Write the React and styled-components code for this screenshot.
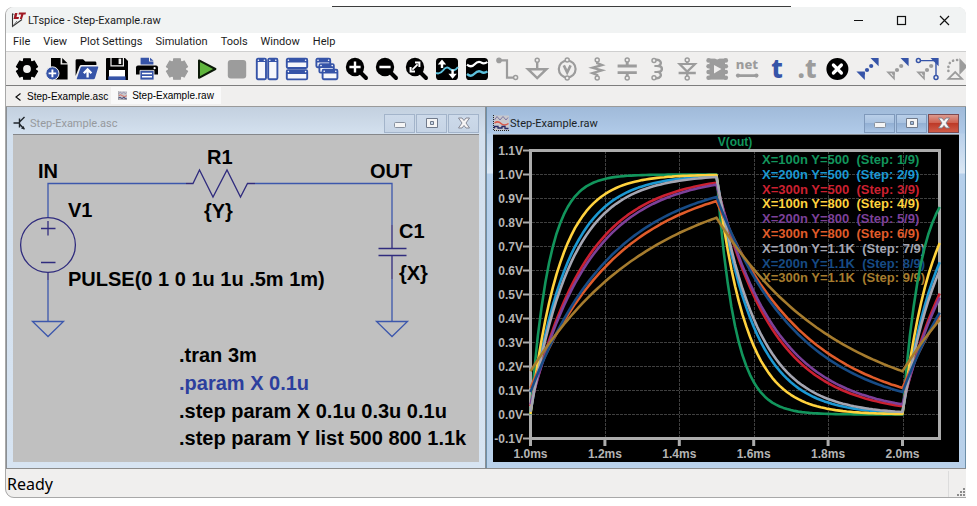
import React from "react";
import styled, { createGlobalStyle, css } from "styled-components";

const GlobalStyle = createGlobalStyle`
  * { box-sizing: border-box; }
  body { margin: 0; background: #fff; font-family: "Noto Sans", "Open Sans", sans-serif; color: #1c1c1c; }
  button { font: inherit; color: inherit; background: none; border: 0; padding: 0; margin: 0; }
  svg { display: block; }
`;

const BLUE = "#3654a8";
const GRAY = "#9c9c9c";
const FACE = "#f0efee";
const UI_FONT = `Roboto, "Noto Sans", sans-serif`;

/* ---------- application frame ---------- */

const Desktop = styled.div`
  padding: 7px 11px 9px 6px;
  background: linear-gradient(90deg, transparent 34%, #3c3c3c 34%, #3c3c3c 81%, transparent 81%) 0 6px / 100% 1px no-repeat;
`;

const AppWindow = styled.div`
  border-radius: 8px 8px 0 8px;
  overflow: hidden;
  background: ${FACE};
  box-shadow: -1px 0 0 0 #a8a8a8, 0 1px 0 0 #a8a8a8;
`;

const TitleBar = styled.header`
  display: flex;
  align-items: center;
  height: 26px;
  padding-left: 5px;
  background: #f1f3f3;
`;

const AppTitle = styled.h1`
  flex: 1;
  margin: 0;
  padding: 1px 0 0 1px;
  font: 400 11px/14px ${UI_FONT};
`;

const CaptionButton = styled.button`
  display: grid;
  place-items: center;
  width: 43px;
  height: 26px;
`;

const MenuBar = styled.nav`
  display: flex;
  gap: 13px;
  height: 18px;
  padding: 0 7px;
  background: #fff;
`;

const MenuItem = styled.button`
  font: 11px/18px ${UI_FONT};
`;

const Toolbar = styled.div`
  display: flex;
  align-items: center;
  height: 35px;
  padding-left: 6px;
  overflow: hidden;
  border-top: 1px solid #cfcfcf;
  border-bottom: 1px solid #7d7d7d;
  background: ${FACE};
`;

const ToolButton = styled.button`
  flex: none;
  display: grid;
  place-items: center;
  width: 30px;
  height: 30px;
`;

const TabStrip = styled.div`
  display: flex;
  align-items: flex-start;
  height: 21px;
  padding: 1px 0 0 5px;
  border-bottom: 1px solid #9a9a9a;
`;

const Tab = styled.button`
  display: flex;
  align-items: center;
  gap: 5px;
  height: ${(p) => (p.$active ? 17 : 20)}px;
  padding: 0 ${(p) => (p.$active ? 7 : 3)}px 0 ${(p) => (p.$active ? 7 : 2)}px;
  background: ${(p) => (p.$active ? "#f9f9f9" : "transparent")};
  font: 10px/14px "Liberation Sans", Arial, sans-serif;
  color: #000;
`;

const StatusBar = styled.footer`
  display: flex;
  justify-content: space-between;
  align-items: flex-end;
  height: 29px;
  border-top: 1px solid #8c8c8c;
  font-size: 16px;
  line-height: 26px;
  padding-left: 1px;
  color: #000;
`;

const StatusText = styled.span`
  align-self: center;
  padding-top: 2px;
`;

const Grip = styled.div`
  width: 18px;
  height: 26px;
  border-left: 1px solid #dcdcdc;
  display: flex;
  align-items: flex-end;
  justify-content: flex-end;
`;

/* ---------- document windows ---------- */

const Workspace = styled.main`
  display: grid;
  grid-template-columns: repeat(2, minmax(0, 1fr));
`;

const Child = styled.section`
  border: solid ${(p) => (p.$active ? "#6d8fa8" : "#8a8f94")};
  border-width: 0 1px 0 1px;
  padding: 0 6px 6px;
  ${(p) =>
    p.$active
      ? css`background: linear-gradient(#a0bad9, #b0cae8 26px, #b9d0ea 27px, #dbe7f4 66px, #b5cfeb 67px, #b9d1ea);`
      : css`background: linear-gradient(#c3d0df, #d3e0ee 26px, #d7e4f2);`}
`;

const ChildBar = styled.header`
  display: flex;
  align-items: center;
  height: 27px;
  gap: 1px;
`;

const ChildTitle = styled.h2`
  flex: 1;
  margin: 0;
  padding: 6px 0 0;
  font: 400 11px/14px ${UI_FONT};
  color: ${(p) => (p.$active ? "#1a1f26" : "#96999d")};
`;

const ChildIcon = styled.span`
  padding-top: 5px;
`;

const ChildButton = styled.button`
  display: grid;
  place-items: center;
  width: 31px;
  height: 19px;
  margin-top: 5px;
  border: 1px solid ${(p) => (p.$close ? "#7d4a50" : p.$active ? "#7f99bb" : "#a3b4ca")};
  background: ${(p) =>
    p.$close
      ? "linear-gradient(#dc9a8e, #cf6150 45%, #bd3a28 50%, #cf5b48)"
      : p.$active
      ? "linear-gradient(#b9cfe9, #a9c2e0 45%, #93b0d4 50%, #a9c4e4)"
      : "linear-gradient(#cddaea, #c6d4e5)"};
`;

const Canvas = styled.svg`
  width: 100%;
  height: auto;
  background: ${(p) => p.$fill};
  border-top: 1px solid #85878a;
  font-family: "Liberation Sans", Arial, sans-serif;
  font-weight: 700;
`;

const SchematicText = styled.text`
  font-size: 20px;
  fill: ${(p) => p.$color || "#000"};
`;

const PlotText = styled.text`
  font-size: ${(p) => (p.$legend ? 13 : 12)}px;
  white-space: pre;
  fill: ${(p) => p.$color || "#b4b4b4"};
  text-anchor: ${(p) => p.$anchor || "start"};
`;

/* ---------- toolbar icons ---------- */

const IconSvg = styled.svg`
  overflow: visible;
`;

const IconText = styled.text`
  font-family: "Noto Sans", sans-serif;
  font-weight: 800;
  font-size: ${(p) => p.$size}px;
  text-anchor: middle;
  fill: ${(p) => p.$color};
`;

const Svg = ({ children }) => (
  <IconSvg width="24" height="24" viewBox="0 0 24 24" fill="none" aria-hidden="true">
    {children}
  </IconSvg>
);

const gearPath = Array.from({ length: 6 }, (_, i) => {
  const at = (deg, r) => {
    const a = ((i * 60 - 90 + deg) * Math.PI) / 180;
    return `${(12 + r * Math.cos(a)).toFixed(2)} ${(12 + r * Math.sin(a)).toFixed(2)}`;
  };
  return `${at(-25, 8.4)}L${at(-18, 10.8)}L${at(18, 10.8)}L${at(25, 8.4)}`;
}).join("L");

const Gear = ({ color, hole }) => (
  <Svg>
    <path d={`M${gearPath}z`} fill={color} stroke={color} strokeWidth="1.2" strokeLinejoin="round" />
    {hole && <circle cx="12" cy="12" r="3.9" fill={FACE} />}
  </Svg>
);

const Pin = ({ x, y }) => <circle cx={x} cy={y} r="2" stroke={GRAY} strokeWidth="1.5" fill={FACE} />;

const Lens = ({ children }) => (
  <Svg>
    <path d="M15 15L21 21" stroke="#000" strokeWidth="4" strokeLinecap="round" />
    <circle cx="10" cy="10" r="9.2" fill="#000" />
    <g stroke="#fff" strokeWidth="2.4">{children}</g>
  </Svg>
);

const Pane = ({ x, y, w, h, bar = 3.5 }) => (
  <g>
    <rect x={x + 0.8} y={y + 0.8} width={w - 1.6} height={h - 1.6} rx="1.2" fill="#f6f7fb" stroke={BLUE} strokeWidth="1.9" />
    <path d={`M${x + 0.8} ${y + bar / 2 + 0.5}h${w - 1.6}`} stroke={BLUE} strokeWidth={bar} />
    <circle cx={x + 2.4} cy={y + 2.2} r="0.8" fill="#fff" />
    <circle cx={x + w - 2.4} cy={y + 2.2} r="0.8" fill="#fff" />
  </g>
);

const Dots = ({ color }) => (
  <g fill={color}>
    <circle cx="8.5" cy="16.5" r="1.5" />
    <circle cx="12" cy="13" r="2.1" />
    <circle cx="16.2" cy="9" r="2.1" />
  </g>
);

const TopTri = <path d="M15.5 1H23.6V9.2z" fill={BLUE} />;
const HollowTri = <path d="M3 15.4H9V21.6z" stroke={GRAY} strokeWidth="1.6" />;

const tools = [
  ["Settings", <Gear color="#000" hole />],
  ["New schematic", (
    <Svg>
      <path d="M6 1H15.6V7.6H22.6V22.5H6z" fill="#000" />
      <path d="M17.2 1L22.6 6.2H17.2z" fill="#000" />
      <circle cx="7.4" cy="16.4" r="6.6" fill={BLUE} stroke={FACE} strokeWidth="1" />
      <path d="M7.4 12.6V20.2M3.6 16.4H11.2" stroke="#fff" strokeWidth="1.9" />
    </Svg>
  )],
  ["Open", (
    <Svg>
      <path d="M0.6 3.6Q0.6 2.2 2 2.2H8L10.4 4.6H20Q21.4 4.6 21.4 6V8H6.4Q5 8 4.4 9.4L0.6 19z" fill="#000" />
      <path d="M7.2 9.4H22.6Q23.6 9.4 23.2 10.6L20 21Q19.6 22.2 18.4 22.2H2Q1.6 22.2 1.8 21.4L5.6 10.6Q6 9.4 7.2 9.4z" fill={BLUE} />
      <path d="M12.6 20.4V13.5M8.8 16.2L12.6 12.4L16.4 16.2" stroke="#fff" strokeWidth="2.3" />
    </Svg>
  )],
  ["Save", (
    <Svg>
      <path d="M2 1H20L23 4V23H1V2Q1 1 2 1z" fill="#000" />
      <path d="M6 1V8.8H18.4V1" stroke={FACE} strokeWidth="1.2" />
      <rect x="13.6" y="1.6" width="2.6" height="5.4" fill={FACE} />
      <rect x="4" y="13" width="16" height="7" fill="#fff" />
      <rect x="3.4" y="19.4" width="17.2" height="3.6" fill={BLUE} />
    </Svg>
  )],
  ["Print", (
    <Svg>
      <path d="M5.6 0.8H14V4.6H18.4V7.4H5.6z" fill={BLUE} />
      <path d="M15 0.8L18.6 3.8H15z" fill={BLUE} />
      <path d="M3 8.4H21Q23 8.4 23 10.4V17.4H1V10.4Q1 8.4 3 8.4z" fill="#000" />
      <circle cx="19.6" cy="11.2" r="1.1" fill="#fff" />
      <path d="M5 13.4H19V23H5z" fill={BLUE} stroke={FACE} strokeWidth="0.8" />
      <path d="M7 16.6H17M7 19.8H17" stroke="#fff" strokeWidth="1.5" />
    </Svg>
  )],
  ["Configure analysis", <Gear color={GRAY} />],
  ["Run", <Svg><path d="M4 3.4L20.4 12L4 20.8z" fill="#5fb53c" stroke="#0c1a08" strokeWidth="2" strokeLinejoin="round" /></Svg>],
  ["Stop", <Svg><rect x="2.8" y="3" width="18.4" height="18.4" rx="3" fill={GRAY} /></Svg>],
  ["Tile vertically", <Svg><Pane x={1} y={1} w={10.8} h={22} /><Pane x={12.4} y={1} w={10.8} h={22} /></Svg>],
  ["Tile horizontally", <Svg><Pane x={1} y={1} w={22} h={10.8} bar={4} /><Pane x={1} y={12.4} w={22} h={10.8} bar={4} /></Svg>],
  ["Cascade", <Svg><Pane x={0.6} y={1} w={15.4} h={10} bar={4} /><Pane x={3.6} y={6.4} w={16} h={10} bar={4} /><Pane x={6.8} y={12} w={16.4} h={11} bar={4} /></Svg>],
  ["Zoom in", <Lens><path d="M10 4.4V15.6M4.4 10H15.6" /></Lens>],
  ["Zoom out", <Lens><path d="M4.4 10H15.6" /></Lens>],
  ["Zoom to fit", <Lens><path d="M7.4 12.6L12.6 7.4" strokeWidth="1.8" /><path d="M10 5.6H14.4V10M5.6 10V14.4H10" strokeWidth="2" /></Lens>],
  ["Autorange", (
    <Svg>
      <rect x="1" y="1" width="22" height="22" rx="3.6" fill="#000" />
      <path d="M1 16Q5 17.5 8 13.5Q11.5 8.5 15 12Q19 15.5 23 10" stroke="#5cc0dc" strokeWidth="2" />
      <path d="M7 5V11M17.6 12.5V18" stroke="#fff" strokeWidth="2.4" />
      <path d="M2.8 7.4L7 2.4L11.2 7.4zM13.4 16.8L17.6 21.8L21.8 16.8z" fill="#fff" />
    </Svg>
  )],
  ["Plot settings", (
    <Svg>
      <rect x="1" y="1" width="22" height="22" rx="3.6" fill="#000" />
      <path d="M2 7.6Q6 11 9.4 7.4Q13 3.6 16 5.4Q19 7.6 22.4 5" stroke="#fff" strokeWidth="2.2" />
      <path d="M2 17Q6 20.4 9.4 16.8Q13 13 16 14.8Q19 17 22.4 14.4" stroke="#5cc0dc" strokeWidth="2.4" />
    </Svg>
  )],
  ["Wire", <Svg><path d="M4 3.4H12V20.6H19" stroke={GRAY} strokeWidth="2.2" /><circle cx="4" cy="3.4" r="2.8" fill={GRAY} /><Pin x={20.6} y={20.6} /></Svg>],
  ["Ground", <Svg><path d="M12.2 4V12M3 12.2H21.4L12.2 21z" stroke={GRAY} strokeWidth="2.4" /><Pin x={12.2} y={3.2} /></Svg>],
  ["Voltage source", <Svg><circle cx="12.2" cy="12" r="8.4" stroke={GRAY} strokeWidth="2.2" /><path d="M8.800 8.400L12.200 15.400L15.600 8.400" stroke={GRAY} strokeWidth="2.6" /><Pin x={12.2} y={3} /><Pin x={12.2} y={21} /></Svg>],
  ["Resistor", <Svg><path d="M12.200 4V6.200L17 8L7.400 10.800L17 13.400L7.400 16.200L12.200 18V20" stroke={GRAY} strokeWidth="2.3" /><Pin x={12.2} y={3} /><Pin x={12.2} y={21} /></Svg>],
  ["Capacitor", <Svg><path d="M12.2 4V9M12.2 15.6V20M2.6 9H21.8M2.6 15.6H21.8" stroke={GRAY} strokeWidth="2.9" /><Pin x={12.2} y={3} /><Pin x={12.2} y={21} /></Svg>],
  ["Inductor", <Svg><path d="M9 3.2C15 1.4 18.4 6.4 13.6 9C18 9.6 18 14.4 13.6 15C18.4 17.6 15 22.6 9 20.8" stroke={GRAY} strokeWidth="2.4" /><path d="M9.4 9H14M9.4 15H14" stroke={GRAY} strokeWidth="2" /><Pin x={9} y={3.4} /><Pin x={9} y={20.8} /></Svg>],
  ["Diode", <Svg><path d="M12.2 4V20M3.6 16H20.8" stroke={GRAY} strokeWidth="2.4" /><path d="M4.600 7H20L12.200 14.600z" stroke={GRAY} strokeWidth="2.2" fill={FACE} /><Pin x={12.2} y={3} /><Pin x={12.2} y={21} /></Svg>],
  ["Component", (
    <Svg>
      <rect x="4.4" y="1.600" width="15.6" height="21" fill={GRAY} />
      {[3.4, 9.2, 15, 20.8].map((y) => <g key={y} fill={GRAY}><circle cx="3.6" cy={y} r="2.3" /><circle cx="20.8" cy={y} r="2.3" /></g>)}
      <path d="M9 8L16.4 12L9 16.4z" fill={FACE} />
      <path d="M10 1A2.4 2.4 0 0 0 14.4 1z" fill={FACE} />
    </Svg>
  )],
  ["Net name", (
    <Svg>
      <IconText x="12" y="12" $size={13} $color={GRAY}>net</IconText>
      <path d="M3 18.600H21.400" stroke={GRAY} strokeWidth="2.6" />
      <circle cx="3" cy="18.600" r="2.1" fill={GRAY} /><circle cx="21.4" cy="18.600" r="2.1" fill={GRAY} />
    </Svg>
  )],
  ["Text", <Svg><IconText x="12" y="21" $size={26} $color={BLUE}>t</IconText></Svg>],
  ["SPICE directive", <Svg><IconText x="12" y="21" $size={26} $color={GRAY}>.t</IconText></Svg>],
  ["Delete", <Svg><circle cx="12.4" cy="12" r="11" fill="#000" /><path d="M8.4 8L16.4 16M16.4 8L8.4 16" stroke="#fff" strokeWidth="3.2" strokeLinecap="round" /></Svg>],
  ["Move", <Svg>{TopTri}<Dots color={BLUE} /><path d="M1.4 14.6H9.8V23z" fill={BLUE} /></Svg>],
  ["Duplicate", <Svg>{TopTri}<Dots color={GRAY} />{HollowTri}</Svg>],
  ["Drag", (
    <Svg>
      {TopTri}<Dots color={GRAY} />{HollowTri}
      <path d="M5 3.6H21V18" stroke={BLUE} strokeWidth="1.4" />
      <circle cx="3.4" cy="3.6" r="2" stroke={BLUE} strokeWidth="1.5" fill={FACE} /><circle cx="21" cy="20.4" r="2" stroke={BLUE} strokeWidth="1.5" fill={FACE} />
    </Svg>
  )],
  ["Rotate", (
    <Svg>
      <path d="M3.4 14V10Q4 3 13 3" stroke={GRAY} strokeWidth="2.6" strokeDasharray="0.1 4" strokeLinecap="round" />
      <path d="M14.4 1V18L22.4 9.6z" fill={GRAY} />
      <path d="M3.4 21.8H17L10.2 15z" stroke={GRAY} strokeWidth="1.8" />
    </Svg>
  )],
];

/* ---------- schematic ---------- */

const labels = [
  [38, 178, "IN"], [207, 164, "R1"], [204, 218, "{Y}"], [68, 217, "V1"], [68, 286, "PULSE(0 1 0 1u 1u .5m 1m)"],
  [370, 178, "OUT"], [399, 238, "C1"], [399, 280, "{X}"], [179, 362, ".tran 3m"], [179, 390, ".param X 0.1u", "#2c3f9e"],
  [179, 418, ".step param X 0.1u 0.3u 0.1u"], [179, 445, ".step param Y list 500 800 1.1k"],
];

const Schematic = () => (
  <Canvas viewBox="13 135 466 327" $fill="#c0c0c0" role="img" aria-label="RC circuit schematic">
    <g fill="none" stroke="#3c57ac" strokeWidth="1.3">
      <path d="M48 218V183.500H186M255 183.500H392V225M392 279V321M48 280V321" />
      <path d="M32.5 321.5H63.5L48 336.5zM376.5 321.5H407.5L392 336.5z" />
    </g>
    <g fill="none" stroke="#302c7e" strokeWidth="1.3">
      <path d="M186 183.500H193L199.500 170L213 197L227 170L240.500 197L247.500 183.500H255" />
      <circle cx="48" cy="245" r="27.4" />
      <path d="M41 228.500H55.500M48 221V235.500M41 262.500H55.500M48 272V280" />
      <path d="M392 225V248M378.500 248.500H406.500M378.500 255.500H406.500M392 255.500V279" />
    </g>
    {labels.map(([x, y, t, c]) => <SchematicText key={t} x={x} y={y} $color={c}>{t}</SchematicText>)}
  </Canvas>
);

/* ---------- waveform plot ---------- */

const traces = [
  [100, 500, "#12955c"], [200, 500, "#1b98d2"], [300, 500, "#cb2030"],
  [100, 800, "#ffd23e"], [200, 800, "#7c4199"], [300, 800, "#e05c2a"],
  [100, 1100, "#a5a6b2"], [200, 1100, "#174b85"], [300, 1100, "#a67c2e"],
];

const timeX = (ms) => 530.5 + (ms - 1) * 372;
const voltY = (v) => 414.5 - v * 240;

function tracePath(nano, ohms) {
  const tau = (nano * ohms) / 1e6;
  const high = 1 / (1 + Math.exp(-0.5 / tau));
  const low = 1 - high;
  const points = [];
  for (let i = 0; i <= 110; i++) {
    const t = i / 100;
    let v;
    if (t <= 0.5) v = 1 - (1 - low) * Math.exp(-t / tau);
    else if (t <= 1) v = high * Math.exp(-(t - 0.5) / tau);
    else v = 1 - (1 - low) * Math.exp(-(t - 1) / tau);
    points.push(`${timeX(1 + t).toFixed(1)},${voltY(v).toFixed(1)}`);
  }
  return points.join(" ");
}

const volts = Array.from({ length: 13 }, (_, i) => (11 - i) / 10);
const times = [1, 1.2, 1.4, 1.6, 1.8, 2];

const Plot = () => (
  <Canvas viewBox="493 135 466 327" $fill="#000" role="img" aria-label="V(out) waveforms">
    <g stroke="#3f3f3f" strokeDasharray="3 1">
      {volts.slice(1, -1).map((v) => <path key={v} d={`M532 ${voltY(v)}H939`} />)}
      {times.slice(1).map((t) => <path key={t} d={`M${Math.round(timeX(t)) + 0.5} 151V438`} />)}
    </g>
    <g fill="none" stroke="#acacac" strokeWidth="3">
      <rect x="530.5" y="150.5" width="409" height="288" />
      {volts.map((v) => <path key={v} strokeWidth="2" d={`M523 ${voltY(v)}H530`} />)}
      {times.map((t) => <path key={t} d={`M${timeX(t)} 438V446`} />)}
    </g>
    {volts.map((v) => <PlotText key={v} x="523" y={voltY(v) + 4} $anchor="end">{v.toFixed(1)}V</PlotText>)}
    {times.map((t) => <PlotText key={t} x={timeX(t)} y="458" $anchor="middle">{t.toFixed(1)}ms</PlotText>)}
    <PlotText x="735" y="146" $anchor="middle" $color="#12955c">V(out)</PlotText>
    {traces.map(([n, r, c], i) => (
      <PlotText key={c} x="762" y={164 + Math.round(i * 14.8)} $color={c} $legend>
        {`X=${n}n Y=${r === 1100 ? "1.1K" : r}  (Step: ${i + 1}/9)`}
      </PlotText>
    ))}
    <g fill="none" strokeWidth="2.6" strokeLinejoin="round">
      {traces.map(([n, r, c]) => <polyline key={c} points={tracePath(n, r)} stroke={c} />)}
    </g>
  </Canvas>
);

const SchematicGlyph = ({ small }) => small ? (
  <svg width="9" height="12" viewBox="0 0 9 12" fill="none" stroke="#111" strokeWidth="1.2"><path d="M7.500 2.500L3 6L7.500 9.500" /></svg>
) : (
  <svg width="16" height="16" viewBox="0 0 16 16" fill="none" stroke="#1f252b" strokeWidth="1.4"><path d="M0.500 8H6M6.500 3.500V12.500M6.500 7L11.500 2M6.500 9L11 14" /><path d="M12 14.500L8 13.500L10.500 11z" fill="#1f252b" stroke="none" /></svg>
);

const WaveGlyph = ({ size }) => (
  <svg width={size} height={size} viewBox="0 0 16 16" fill="none">
    <rect x="1" y="0.5" width="15" height="15" fill="#c9c8cc" />
    <path d="M1.500 5L4 1.500L7 5L10 1.500L13 5L15 2.500" stroke="#7c78a5" />
    <path d="M1.500 8Q5 5.500 8 8.500T15.500 8.500" stroke="#d9594a" strokeWidth="1.5" />
    <path d="M1.500 13.500V11.500H5V13H9V11.500H12V13.500H15.500" stroke="#262a66" strokeWidth="1.3" />
    <path d="M0.500 0V15.500H16" stroke="#222" strokeDasharray="1 1" />
  </svg>
);

const ChildWindow = ({ title, active, icon, children }) => (
  <Child $active={active} aria-label={title}>
    <ChildBar>
      <ChildIcon>{icon}</ChildIcon>
      <ChildTitle $active={active}>{title}</ChildTitle>
      <ChildButton $active={active} aria-label="Minimize">
        <svg width="14" height="12" viewBox="0 0 14 12"><rect x="1.500" y="5.500" width="11" height="5" rx="1" fill="#f5f5f5" stroke="#87909e" /></svg>
      </ChildButton>
      <ChildButton $active={active} aria-label="Maximize">
        <svg width="14" height="12" viewBox="0 0 14 12"><path d="M1.500 1.500H12.500V10.500H1.500zM5.500 4.500V7.500H8.500V4.500z" fill="#f5f5f5" fillRule="evenodd" stroke="#707a8b" /></svg>
      </ChildButton>
      <ChildButton $active={active} $close={active} aria-label="Close">
        <svg width="14" height="12" viewBox="0 0 14 12"><path d="M1.500 1H5L7 3.500L9 1H12.500L9 6L12.500 11H9L7 8.500L5 11H1.500L5 6z" fill="#f7f5f5" stroke="#7c7f8c" strokeWidth="0.900" /></svg>
      </ChildButton>
    </ChildBar>
    {children}
  </Child>
);

export default function App() {
  return (
    <Desktop>
      <GlobalStyle />
      <AppWindow>
        <TitleBar>
          <svg width="16" height="16" viewBox="0 0 16 16" fill="none" aria-hidden="true">
            <path d="M1.500 1.500V14.500L11 7.500" stroke="#333" strokeWidth="1.100" />
            <path d="M1.500 1.500L5 4M1.500 14.500L6 9" stroke="#555" strokeWidth="0.800" />
            <path d="M4 1H6.500L5.500 5H8L7.500 7H2.500z" fill="#a01822" />
            <path d="M8 0.500H15L14.500 2.500H12.500L11 7H8.800L10.200 2.500H7.500z" fill="#a01822" />
          </svg>
          <AppTitle>LTspice - Step-Example.raw</AppTitle>
          <CaptionButton aria-label="Minimize"><svg width="11" height="11"><path d="M1 5.500H10" stroke="#111" strokeWidth="1.200" /></svg></CaptionButton>
          <CaptionButton aria-label="Maximize"><svg width="11" height="11"><rect x="1.500" y="1.500" width="8" height="8" fill="none" stroke="#111" strokeWidth="1.200" /></svg></CaptionButton>
          <CaptionButton aria-label="Close"><svg width="11" height="11"><path d="M1 1L10 10M10 1L1 10" stroke="#111" strokeWidth="1.200" /></svg></CaptionButton>
        </TitleBar>
        <MenuBar>
          {["File", "View", "Plot Settings", "Simulation", "Tools", "Window", "Help"].map((m) => <MenuItem key={m}>{m}</MenuItem>)}
        </MenuBar>
        <Toolbar role="toolbar">
          {tools.map(([name, icon]) => <ToolButton key={name} aria-label={name}>{icon}</ToolButton>)}
        </Toolbar>
        <TabStrip role="tablist">
          <Tab role="tab" aria-selected="false"><SchematicGlyph small />Step-Example.asc</Tab>
          <Tab role="tab" aria-selected="true" $active><WaveGlyph size={9} />Step-Example.raw</Tab>
        </TabStrip>
        <Workspace>
          <ChildWindow title="Step-Example.asc" icon={<SchematicGlyph />}><Schematic /></ChildWindow>
          <ChildWindow title="Step-Example.raw" active icon={<WaveGlyph size={16} />}><Plot /></ChildWindow>
        </Workspace>
        <StatusBar>
          <StatusText>Ready</StatusText>
          <Grip>
            <svg width="10" height="10" viewBox="0 0 10 10" fill="#8c8c8c"><path d="M7 1h2v2h-2zM4 4h2v2h-2zM7 4h2v2h-2zM1 7h2v2h-2zM4 7h2v2h-2zM7 7h2v2h-2z" /></svg>
          </Grip>
        </StatusBar>
      </AppWindow>
    </Desktop>
  );
}
